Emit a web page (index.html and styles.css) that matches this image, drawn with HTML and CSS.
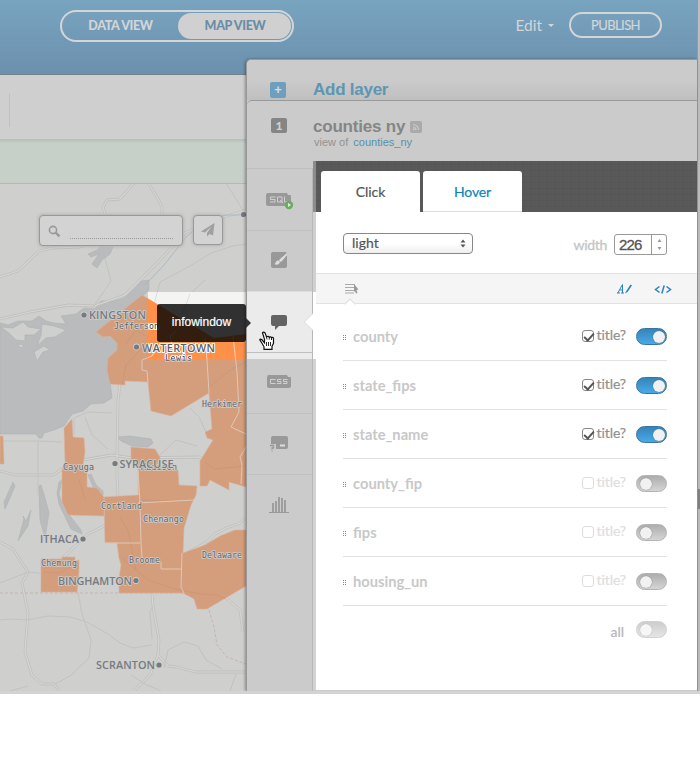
FILE: index.html
```
<!DOCTYPE html>
<html lang="en">
<head>
<meta charset="utf-8">
<title>Map editor</title>
<link rel="stylesheet" href="styles.css">
</head>
<body>
<div class="app">
  <div class="window">
    <header class="topbar">
      <nav class="switch">
        <a class="switch-item">DATA VIEW</a>
        <a class="switch-item active">MAP VIEW</a>
      </nav>
      <div class="actions">
        <a class="edit">Edit <i class="caret"></i></a>
        <a class="publish">PUBLISH</a>
      </div>
    </header>
    <div class="workspace">
      <main class="canvas">
        <div class="toolbar"><span class="separator"></span></div>
        <div class="notice"></div>
        <div class="map">
          <svg class="map-svg" viewBox="0 183 246 508" width="246" height="508">
            <defs>
              <clipPath id="spot"><rect x="148" y="292" width="98" height="67"/></clipPath>
              <path id="north" d="M96 332L142 295L149 299L180 318L214 338L246 334V487L229 482V490L210 480L207 486H200V461L213 440L207 438L205 432L212 429L209 393L171 416L151 411L148 382L125 381V385L110 384L107 370L108 358L117 350V343L110 336L103 337Z"/>
              <path id="borders" d="M142 360V370L147 371L148 382M142 360L152 356L156 349L163 344L172 345L170 336L176 331M205 338L207 360L209 393M233 336L237 372L239 412L231 427L246 434M246 447L240 457L242 465L241 484"/>
            </defs>
            <g class="water">
              <path d="M0 323L8 325L18 321L32 321L39 316L46 321L54 323L66 324L61 316L76 314L84 308L95 309L101 301L113 301L124 298L134 289L141 281L149 280V290L136 302L107 329L117 342L125 350L108 361L111 390L112 398L104 403L91 404L83 411L72 414L64 426L54 430L44 433L42 438H39L36 434L0 434Z"/>
              <path d="M113 247L103 244L97 250L88 254L91 257L99 254L92 264L97 268L102 260L110 254Z"/>
              <path d="M117 437L130 436L151 439L153 443L148 447L132 446L121 441Z"/>
              <path d="M88 475L91 474L96 485L103 491V495L94 489ZM59 482L62 480L59 494L64 508L74 521L81 530L82 534L71 529L59 504L57 493ZM41 485L45 498L49 513L45 538L40 520L39 486ZM13 482L15 486L9 500L5 509L4 502ZM31 510L28 526L18 541L24 519L23 516L26 521Z"/>
            </g>
            <g class="land-patch">
              <path d="M1 327L13 328L23 322L28 327L41 329L34 335L25 335L25 341L16 340L9 333ZM42 324L54 326L66 330L55 337L46 338L37 346L41 335ZM44 346L50 350L43 352L37 361L34 352ZM17 344L24 345L21 348Z"/>
            </g>
            <g class="roads">
              <path d="M0 277L18 271L39 251L52 248L80 247L103 237L106 217L103 207L107 200L120 199L134 183M148 183L157 197L162 207V220M0 319L30 312L68 305L94 306L125 295L160 260L185 233L205 223L246 210M0 471L15 475L53 475L73 462L94 458L112 455L132 458L200 457L208 464L246 458M122 367L118 400L117 455L117 475L118 498L110 523L88 534L68 553L60 560M0 542L13 549L28 572L22 583L28 613L25 652L32 675L42 684L54 684L59 691M152 593L153 606L159 640L158 655L168 666L177 667L195 672L246 672M158 655L150 675L134 691M183 555L207 542L215 534L226 528L238 524L246 518M226 598L240 610L243 632"/>
            </g>
            <g class="roads-core">
              <path d="M0 277L18 271L39 251L52 248L80 247L103 237L106 217L103 207L107 200L120 199L134 183M148 183L157 197L162 207V220M0 319L30 312L68 305L94 306L125 295L160 260L185 233L205 223L246 210M0 471L15 475L53 475L73 462L94 458L112 455L132 458L200 457L208 464L246 458M122 367L118 400L117 455L117 475L118 498L110 523L88 534L68 553L60 560M0 542L13 549L28 572L22 583L28 613L25 652L32 675L42 684L54 684L59 691M152 593L153 606L159 640L158 655L168 666L177 667L195 672L246 672M158 655L150 675L134 691M183 555L207 542L215 534L226 528L238 524L246 518M226 598L240 610L243 632"/>
            </g>
            <path class="river" d="M145 285L165 264L186 237L208 219L226 215L243 215"/>
            <path class="trails" d="M226 183L246 215M105 258L111 281L98 300L92 309M147 330L160 282L190 266L211 253L233 246L246 244M182 315L190 294L205 280M74 435V418L88 412L112 413M85 417L92 435L108 449M0 441L38 441L62 442M38 441L38 495M190 408L199 417L207 434M160 455L176 440L197 446M0 620L12 619L27 620L48 616L70 617L87 622L108 634L120 643L133 648L152 645M78 592L82 614L91 640L89 658L70 676L55 684M153 606L150 612L152 639M164 668L168 650L184 642L198 646L206 660L222 669M0 583L28 572L48 574L60 565M131 675L145 684L161 691M236 674L230 691M10 691L28 686"/>
            <path class="state" d="M0 593H184M209 610L214 627L217 645L227 657L246 664"/>
            <g class="county">
              <use href="#north"/>
              <path d="M0 436H3L4 464H0ZM64 428L72 419L73 437L84 438L85 452L83 465L87 468V487L97 488L104 497V516L68 515L62 502V470L65 462ZM131 447L155 449L160 457V465L165 470H178L179 485L197 486L196 495L191 505L184 528L183 553L205 545L220 536L235 530H246V586L207 609L197 609L194 599L183 593H119V578L121 565L119 558L117 543H105L104 497L138 495V468L131 459ZM41 559H62V557H75V561L79 560V572L77 592H41Z"/>
            </g>
            <path class="tracks" d="M125 345L136 330L158 343M122 385L126 365L142 348M205 462L214 469L246 466M122 558L148 580L175 589L200 594L217 595L226 599M138 500L170 501M120 517L128 530L136 570M44 572L60 573L76 563M208 388L230 370L246 362M79 480L85 499"/>
            <g class="county-lines">
              <use href="#borders"/>
              <path d="M138 495V470L140 503L141 543M138 503L194 500M105 543H140M141 543L142 558M161 562V569H181M182 553L181 587L184 593"/>
            </g>
            <g clip-path="url(#spot)">
              <rect class="bright-land" x="148" y="292" width="98" height="67"/>
              <path class="bright-track" d="M147 330L160 282L190 266M182 315L190 294"/>
              <use class="bright-county" href="#north"/>
              <use class="bright-lines" href="#borders"/>
            </g>
            <g class="counties">
              <text x="114" y="329" textLength="45">Jefferson</text>
              <text x="165" y="361" textLength="27">Lewis</text>
              <text x="202" y="407" textLength="40">Herkimer</text>
              <text x="63" y="470" textLength="31">Cayuga</text>
              <text x="141" y="470" textLength="36">Madison</text>
              <text x="101" y="509" textLength="41">Cortland</text>
              <text x="143" y="522" textLength="41">Chenango</text>
              <text x="41" y="566" textLength="36">Chemung</text>
              <text x="129" y="563" textLength="31">Broome</text>
              <text x="202" y="558" textLength="40">Delaware</text>
            </g>
            <g class="cities">
              <text x="89" y="319" textLength="57">KINGSTON</text>
              <text x="142" y="351.500" textLength="73">WATERTOWN</text>
              <text x="119.500" y="467.500" textLength="54">SYRACUSE</text>
              <text x="40" y="543" textLength="39">ITHACA</text>
              <text x="58" y="585" textLength="74">BINGHAMTON</text>
              <text x="96" y="669" textLength="59">SCRANTON</text>
              <circle cx="84" cy="315" r="2.600"/><circle cx="136.500" cy="347" r="2.600"/><circle cx="115" cy="463.500" r="2.600"/><circle cx="83" cy="539" r="2.600"/><circle cx="136" cy="580.500" r="2.600"/><circle cx="159" cy="665" r="2.600"/><circle cx="243.500" cy="214.500" r="2.600"/>
            </g>
            <g clip-path="url(#spot)" class="bright-labels">
              <text class="c" x="114" y="329" textLength="45">Jefferson</text>
              <text class="c" x="165" y="361" textLength="27">Lewis</text>
              <text x="142" y="351.500" textLength="73">WATERTOWN</text>
            </g>
          </svg>
          <div class="map-controls">
            <div class="search">
              <svg width="14" height="14" viewBox="0 0 14 14"><circle cx="5" cy="5" r="3.600" fill="none" stroke="#999" stroke-width="1.600"/><path d="M7.500 7.500L11.500 11.300" stroke="#999" stroke-width="2.400"/></svg>
              <span class="search-line"></span>
            </div>
            <div class="locate"><svg width="14" height="14" viewBox="0 0 14 14"><path d="M13.500 0L0 8.500L4 9.500L10.500 3.500L6 10V13.500L8.500 11L12 12.500Z" fill="#a0a0a0"/></svg></div>
          </div>
        </div>
      </main>
      <aside class="panel">
        <div class="add-layer"><span class="plus">+</span><b>Add layer</b></div>
        <section class="layer">
          <div class="layer-head">
            <span class="order">1</span>
            <div>
              <div class="layer-name">counties ny <span class="feed"><svg width="12" height="12" viewBox="0 0 12 12"><g fill="none" stroke="#ccc" stroke-width="1.200"><path d="M3 6A3 3 0 0 1 6 9M3 3.500A5.500 5.500 0 0 1 8.500 9"/></g><circle cx="3.800" cy="8.200" r="1" fill="#ccc"/></svg></span></div>
              <div class="layer-source">view of <a>counties_ny</a></div>
            </div>
          </div>
          <div class="layer-body">
            <nav class="tools">
              <span class="tool"><svg width="28" height="20" viewBox="0 0 28 20"><path d="M2 2H21L22 4H24Q25 4 25 5V13Q25 15 23 15H2Q0 15 0 13V4Q0 2 2 2Z" fill="#999"/><path d="M9.500 6H4.500V8.500H9V11H4M11.500 6H16V11H11.500ZM14 9L17 12M18.500 5.500V11H22" fill="none" stroke="#d0d0d0"/><circle cx="23" cy="14" r="4.200" fill="#6cad62"/><path d="M22 12L25 14L22 16Z" fill="#e4ebe2"/></svg></span>
              <span class="tool"><svg width="16" height="16" viewBox="0 0 16 16"><rect width="16" height="16" rx="2" fill="#999"/><path d="M16 1L9 7L8 8.500L9.500 10L11 9L16 3ZM7.500 8.500Q5 8 4.500 11Q4 12 3 12Q8 14 9 10Z" fill="#ddd"/></svg></span>
              <span class="tool selected"><svg width="16" height="16" viewBox="0 0 16 16"><path d="M2 1H14Q16 1 16 3V9.500Q16 12 14 12H8L4 16V12H2Q0 12 0 9.500V3Q0 1 2 1Z" fill="#636363"/></svg><i class="notch"></i></span>
              <span class="tool"><svg width="24" height="14" viewBox="0 0 24 14"><path d="M2 0H20L21 2H23Q24 2 24 3V11Q24 13 22 13H2Q0 13 0 11V2Q0 0 2 0Z" fill="#999"/><path d="M8.500 4.500H3.500V8.500H8.500M14.500 4.500H10.500V6.500H14V8.500H10M20.500 4.500H16.500V6.500H20V8.500H16" fill="none" stroke="#d0d0d0"/></svg></span>
              <span class="tool"><svg width="20" height="16" viewBox="0 0 20 16"><path d="M4 0H17Q19 0 19 2V11Q19 13 17 13H7V8H2V2Q2 0 4 0Z" fill="#999"/><rect x="11" y="8.500" width="5" height="2" fill="#ddd"/><path d="M1 9.500H4.500V12H3V13.500M3 14.500V15.500" fill="none" stroke="#999" stroke-width="1.300"/></svg></span>
              <span class="tool"><svg width="20" height="16" viewBox="0 0 20 16"><path d="M4 15V6M7 15V4M10 15V0M13 15V1M16 15V3" stroke="#999" stroke-width="1.800"/><path d="M0 15.500H20" stroke="#999"/></svg></span>
            </nav>
            <div class="sheet">
              <div class="tabs"><a class="tab">Click</a><a class="tab hover">Hover</a></div>
              <div class="options">
                <div class="select"><span>light</span><svg width="6" height="9" viewBox="0 0 6 9"><path d="M.5 3.500L3 .5L5.500 3.500ZM.5 5.500L3 8.500L5.500 5.500Z" fill="#555"/></svg></div>
                <label class="width">width <span class="number"><span class="value">226</span><span class="stepper"><svg width="5" height="11" viewBox="0 0 5 11"><path d="M.5 3L2.500 0L4.500 3ZM.5 8L2.500 11L4.500 8Z" fill="#999"/></svg></span></span></label>
              </div>
              <div class="modes">
                <svg class="list-icon" width="14" height="12" viewBox="0 0 14 12"><path d="M0 1.500H10M0 4.500H9M0 7.500H9M0 10H9" stroke="#aaa" stroke-width="1.200"/><path d="M9 1L13.500 6.500L11.500 7L12.500 10L11 10.500L10 8L9 9Z" fill="#999"/></svg>
                <span class="mode-links">
                  <svg width="17" height="12" viewBox="0 0 17 12"><path d="M0 10H3M.8 10L5.500 1.500V10M4 10H7M2.800 7H5.500" fill="none" stroke="#2c82bd"/><path d="M8 10.500L9 8.500L13.500 1.500L15 2.500L10.500 9Z" fill="#2c82bd"/></svg>
                  <svg width="18" height="12" viewBox="0 0 18 12"><path d="M5.500 3.500L1.500 6.500L5.500 9.500M12.500 3.500L16.500 6.500L12.500 9.500M10.200 2.500L7.800 10.500" fill="none" stroke="#2c82bd" stroke-width="1.500"/></svg>
                </span>
                <i class="mode-arrow"></i>
              </div>
              <div class="fields">
                <div class="field"><i class="grip"></i><span class="name">county</span><span class="check"><i class="box"></i>title?</span><i class="toggle"></i></div>
                <div class="field"><i class="grip"></i><span class="name">state_fips</span><span class="check"><i class="box"></i>title?</span><i class="toggle"></i></div>
                <div class="field"><i class="grip"></i><span class="name">state_name</span><span class="check"><i class="box"></i>title?</span><i class="toggle"></i></div>
                <div class="field off"><i class="grip"></i><span class="name">county_fip</span><span class="check"><i class="box"></i>title?</span><i class="toggle"></i></div>
                <div class="field off"><i class="grip"></i><span class="name">fips</span><span class="check"><i class="box"></i>title?</span><i class="toggle"></i></div>
                <div class="field off"><i class="grip"></i><span class="name">housing_un</span><span class="check"><i class="box"></i>title?</span><i class="toggle"></i></div>
                <div class="all"><span>all</span><i class="toggle"></i></div>
              </div>
            </div>
          </div>
        </section>
      </aside>
    </div>
  </div>
  <div class="scrollbar"><i></i></div>
  <div class="tooltip">infowindow</div>
  <svg class="pointer" width="16" height="19" viewBox="0 0 16 19"><path d="M5.500 11.500L3 8.500Q1 7 .8 8.500L3 12L5 15.500V18H13V15L14.500 12V7Q14 5.500 12.500 6.500Q12 5 10.300 5.800Q9.500 4.500 7.500 5.500L6 1.500Q4.500 0 3.500 1.500L5.500 8Z" fill="#fff" stroke="#111" stroke-width="1.200" transform="translate(0 .3)"/><path d="M7.500 11V15M9.500 11V15M11.500 11V15M7.500 6L8 8.500M10.300 6V8.500M12.500 6.500V9" stroke="#111" stroke-width=".9"/></svg>
</div>
</body>
</html>
```
FILE: styles.css
```
* { box-sizing: border-box; }
body { margin: 0; background: #fff; font-family: Lato, sans-serif; }
i { font-style: normal; }
svg { display: block; }
.app { position: relative; display: flex; width: 700px; height: 694px; border-bottom: 3px solid #d3d3d3; overflow: hidden; }
.window { width: 697px; }
.scrollbar { width: 3px; background: #bdbdbd; border-left: 1px solid #999; padding-top: 489px; }
.scrollbar i { display: block; height: 20px; background: #808080; }

.topbar { display: flex; align-items: flex-start; justify-content: space-between; height: 75px; padding: 10px 35px 0 60px; background: linear-gradient(#78a4c0, #6c90ad); border-bottom: 1px solid #74808a; }
.switch { display: flex; width: 234px; height: 32px; padding: 1px; border: 2px solid #d3d5d7; border-radius: 16px; color: #d3d5d7; font-weight: 900; font-size: 12.500px; line-height: 26px; text-align: center; letter-spacing: -.35px; }
.switch-item { width: 115px; }
.switch-item.active { width: 113px; height: 26px; padding-left: 1px; background: #d0d0d0; border-radius: 13px; color: #6b8da8; }
.actions { display: flex; align-items: center; gap: 15px; margin-top: 1px; color: #d3d5d7; }
.edit { display: flex; align-items: center; gap: 6px; font-size: 15.500px; line-height: 26px; padding-top: 1px; }
.caret { border: 3px solid transparent; border-top-color: #d3d5d7; border-bottom: 0; margin-top: 1px; }
.publish { width: 93px; height: 26px; border: 2px solid #d3d5d7; border-radius: 13px; font-size: 13px; line-height: 22px; text-align: center; letter-spacing: -.6px; -webkit-text-stroke: .2px; }

.workspace { display: flex; height: 616px; }
.canvas { width: 246px; }
.toolbar { height: 64px; padding: 18px 9px; background: #cfcfcf; }
.separator { display: block; width: 1px; height: 34px; background: #c1c1c1; }
.notice { height: 45px; background: #c7d0c8; border-top: 1px solid #bcc0bc; border-bottom: 1px solid #b5b9b5; box-shadow: inset 0 3px 3px -2px #b4beb5; }
.map { position: relative; height: 507px; background: #cfcfcd; overflow: hidden; }
.map-svg { margin-top: -1px; }
.water { fill: #b9bbbd; stroke: #aeb3b6; stroke-width: .6; }
.land-patch { fill: #cfcfcd; stroke: #b0b5b7; stroke-width: .7; }
.roads { fill: none; stroke: #c0c0be; stroke-width: 2.8; stroke-linejoin: round; }
.roads-core { fill: none; stroke: #d6d6d4; stroke-width: 1.2; stroke-linejoin: round; }
.trails { fill: none; stroke: #c2c2bf; stroke-width: 1; stroke-linejoin: round; }
.river { fill: none; stroke: #acb9c2; stroke-width: 1; }
.state { fill: none; stroke: #c5b5b1; stroke-width: 1; stroke-dasharray: 3 2; }
.county { fill: #d49d7b; stroke: #d9b49e; stroke-width: .6; }
.tracks { fill: none; stroke: #c69070; stroke-width: 1; opacity: .5; }
.county-lines { fill: none; stroke: #dfc7b9; stroke-width: 1; }
.bright-land { fill: #f4f4f2; }
.bright-track { fill: none; stroke: #ddd; }
.bright-county { fill: #ff904a; }
.bright-lines { fill: none; stroke: #ffd0b0; }
.counties text { font: 8.300px "DejaVu Sans Mono", monospace; fill: #666; stroke: #d0cdca; stroke-width: 1.6px; paint-order: stroke; stroke-linejoin: round; }
.cities { fill: #757b81; stroke: #cfcfcd; stroke-width: 1.600px; paint-order: stroke; stroke-linejoin: round; }
.cities text { font: 600 10.800px "Open Sans", sans-serif; }
.bright-labels { fill: #56606a; stroke: #fff; stroke-width: 2px; paint-order: stroke; stroke-linejoin: round; font: 600 10.800px "Open Sans", sans-serif; }
.bright-labels .c { fill: #333; font: 8.300px "DejaVu Sans Mono", monospace; }
.map-controls { position: absolute; top: 31px; left: 39px; display: flex; gap: 10px; }
.search, .locate { display: flex; height: 31px; background: #d3d3d3; border: 1px solid #999; border-radius: 4px; box-shadow: 0 0 3px 1px #b5b5b5; }
.search { width: 144px; padding: 9px 8px 6px; gap: 8px; align-items: flex-start; }
.search-line { align-self: flex-end; flex: none; width: 103px; border-bottom: 1px dotted #999; }
.locate { width: 30px; align-items: center; justify-content: center; height: 30px; }

.panel { position: relative; width: 451px; height: 632px; margin-top: -16px; background: #cbcbcb; border: 1px solid #999; border-right: 0; border-bottom: 0; border-radius: 5px 0 0; box-shadow: -1px 0 3px rgba(0,0,0,.35); font-family: "Liberation Sans", sans-serif; }
.add-layer { display: flex; align-items: center; height: 40px; padding: 19px 0 0 23px; border-radius: 5px 0 0; background: linear-gradient(#cbcbcb 50%, #bfbfbf); color: #5c97b2; font-size: 17px; letter-spacing: -.25px; }
.plus { width: 16px; height: 16px; margin-right: 27px; background: #6f9fbe; border-radius: 2px; color: #d5dde2; font: bold 13px/15px "Liberation Sans", sans-serif; text-align: center; }
.layer { height: 591px; border-top: 1px solid #999; border-radius: 5px 0 0; background: #cbcbcb; }
.layer-head { display: flex; height: 60px; padding: 17px 0 0 24px; }
.order { width: 16px; height: 15px; margin-right: 26px; border-radius: 2px; background: #858585; color: #d0d0d0; font: 900 12px/15px Lato, sans-serif; text-align: center; }
.layer-name { display: flex; align-items: center; gap: 5px; font-weight: bold; font-size: 17px; line-height: 17px; letter-spacing: -.2px; color: #858585; }
.feed { background: #aaa; border-radius: 2px; }
.layer-source { margin: 0 0 0 1px; font-size: 11px; line-height: 14px; color: #929292; }
.layer-source a { color: #5491b0; margin-left: 2px; }
.layer-body { display: flex; height: 530px; }
.tools { width: 66px; margin-top: 7px; border-right: 1px solid #b8b8b8; }
.tool { position: relative; display: flex; align-items: center; justify-content: center; height: 61px; padding-right: 2px; border-top: 1px solid #bfbfbf; }
.tool:first-child { height: 62px; padding-top: 2px; padding-right: 0; }
.tool:nth-child(2), .tool:nth-child(4) { padding-bottom: 2px; }
.tool.selected { height: 61px; background: #ebebeb; border-top: 1px solid #ddd; }
.tool:nth-child(4) { background: linear-gradient(#ebebeb 6px, transparent 6px); }
.notch { position: absolute; right: -6px; top: 24px; width: 12px; height: 12px; background: #fff; border: 1px solid #ddd; border-width: 0 0 1px 1px; transform: rotate(45deg); }
.sheet { width: 384px; height: 529px; border-left: 3px solid; border-image: linear-gradient(#8c8c8c 51px, #d0d0d0 51px 131px, #fff 131px 198px, #d3d3d3 198px) 0 0 0 3; background: #fff; }
.tabs { display: flex; gap: 3px; height: 51px; padding: 10px 0 0 5px; background: repeating-linear-gradient(0deg, transparent 0 5px, rgba(0,0,0,.04) 5px 6px), repeating-linear-gradient(90deg, #595959 0 7px, #565656 7px 8px); font: 14px/41px Lato, sans-serif; color: #555; }
.tab { width: 99px; background: #fff; border-radius: 3px 3px 0 0; text-align: center; letter-spacing: -.1px; -webkit-text-stroke: .2px; }
.hover { color: #0c83b8; border-bottom: 1px solid #ddd; }
.options { display: flex; justify-content: space-between; height: 61px; padding: 21px 30px 0 27px; font: 14px/20px Lato, sans-serif; color: #555; }
.select { display: flex; align-items: center; justify-content: space-between; width: 130px; height: 21px; padding: 0 6px 1px 8px; border: 1px solid #888; border-radius: 4px; background: linear-gradient(#fff 50%, #eee); -webkit-text-stroke: .2px; }
.width { display: flex; gap: 7px; color: #c5c5c5; line-height: 23px; letter-spacing: -.3px; -webkit-text-stroke: .3px; }
.number { display: flex; width: 53px; height: 21px; margin-top: 1px; border: 1px solid #999; border-radius: 3px; color: #555; font: 15px/20px "Liberation Sans", sans-serif; letter-spacing: -.8px; }
.value { width: 37px; padding-left: 4px; border-right: 1px solid #999; }
.stepper { padding: 4px 0 0 5px; }
.modes { position: relative; display: flex; align-items: center; justify-content: space-between; height: 31px; padding: 0 25px 0 29px; border: solid #e2e2e2; border-width: 1px 0; background: #f5f5f5; }
.mode-links { display: flex; gap: 20px; }
.mode-arrow { position: absolute; left: 30px; bottom: -5px; width: 8px; height: 8px; background: #fff; border: 1px solid #ddd; border-width: 1px 0 0 1px; transform: rotate(45deg); }
.fields { padding: 8px 30px 0 27px; font: 14px/20px Lato, sans-serif; }
.field { display: flex; align-items: center; height: 49px; padding-top: 1px; border-bottom: 1px solid #e2e2e2; }
.grip { width: 4px; height: 6px; margin: 3px 6px 0 0; background: repeating-conic-gradient(#8a8a8a 0 25%, transparent 0 100%) -1px 0 / 2px 2px; }
.name { flex: 1; padding-bottom: 1px; color: #c8c8c8; font-weight: bold; font-size: 14.700px; }
.check { display: flex; align-items: center; gap: 3px; margin-right: 10px; color: #909090; padding-bottom: 3px; letter-spacing: -.1px; -webkit-text-stroke: .2px; }
.box { position: relative; width: 12px; height: 12px; margin-top: 2px; border: 1px solid #888; border-radius: 3px; background: #fff; }
.box::after { content: ""; position: absolute; left: 3px; top: 0; width: 4px; height: 8px; border: solid #555; border-width: 0 2px 2px 0; transform: rotate(42deg); }
.off .box::after { display: none; }
.off .check { color: #dedede; }
.off .box { border-color: #ddd; }
.toggle { width: 31px; height: 17px; padding: 2px 2px 2px 16px; border-radius: 9px; border: 1px solid #39749d; background: linear-gradient(#3585b8, #48a9e8); }
.toggle::after { content: ""; display: block; width: 12px; height: 12px; margin-top: -.5px; border-radius: 50%; background: #f1f1f1; box-shadow: 0 0 1px #555; }
.off .toggle, .all .toggle { padding-left: 3px; border-color: #b3b3b3; background: linear-gradient(#adadad, #d5d5d5); }
.all { display: flex; justify-content: flex-end; align-items: center; gap: 12px; height: 47px; color: #b5b5b5; -webkit-text-stroke: .2px; }
.all span { padding-top: 4px; }
.all .toggle { opacity: .6; }

.tooltip { position: absolute; left: 157px; top: 304px; width: 89px; height: 38px; border-radius: 3px; background: rgba(0,0,0,.8); color: #fff; font: 12px/36px "Liberation Sans", sans-serif; text-align: center; -webkit-text-stroke: .2px #fff; }
.tooltip::after { content: ""; position: absolute; left: 89px; top: 14px; border: 5px solid transparent; border-left-color: #333; border-right: 0; }
.pointer { position: absolute; left: 259px; top: 331px; }
```
